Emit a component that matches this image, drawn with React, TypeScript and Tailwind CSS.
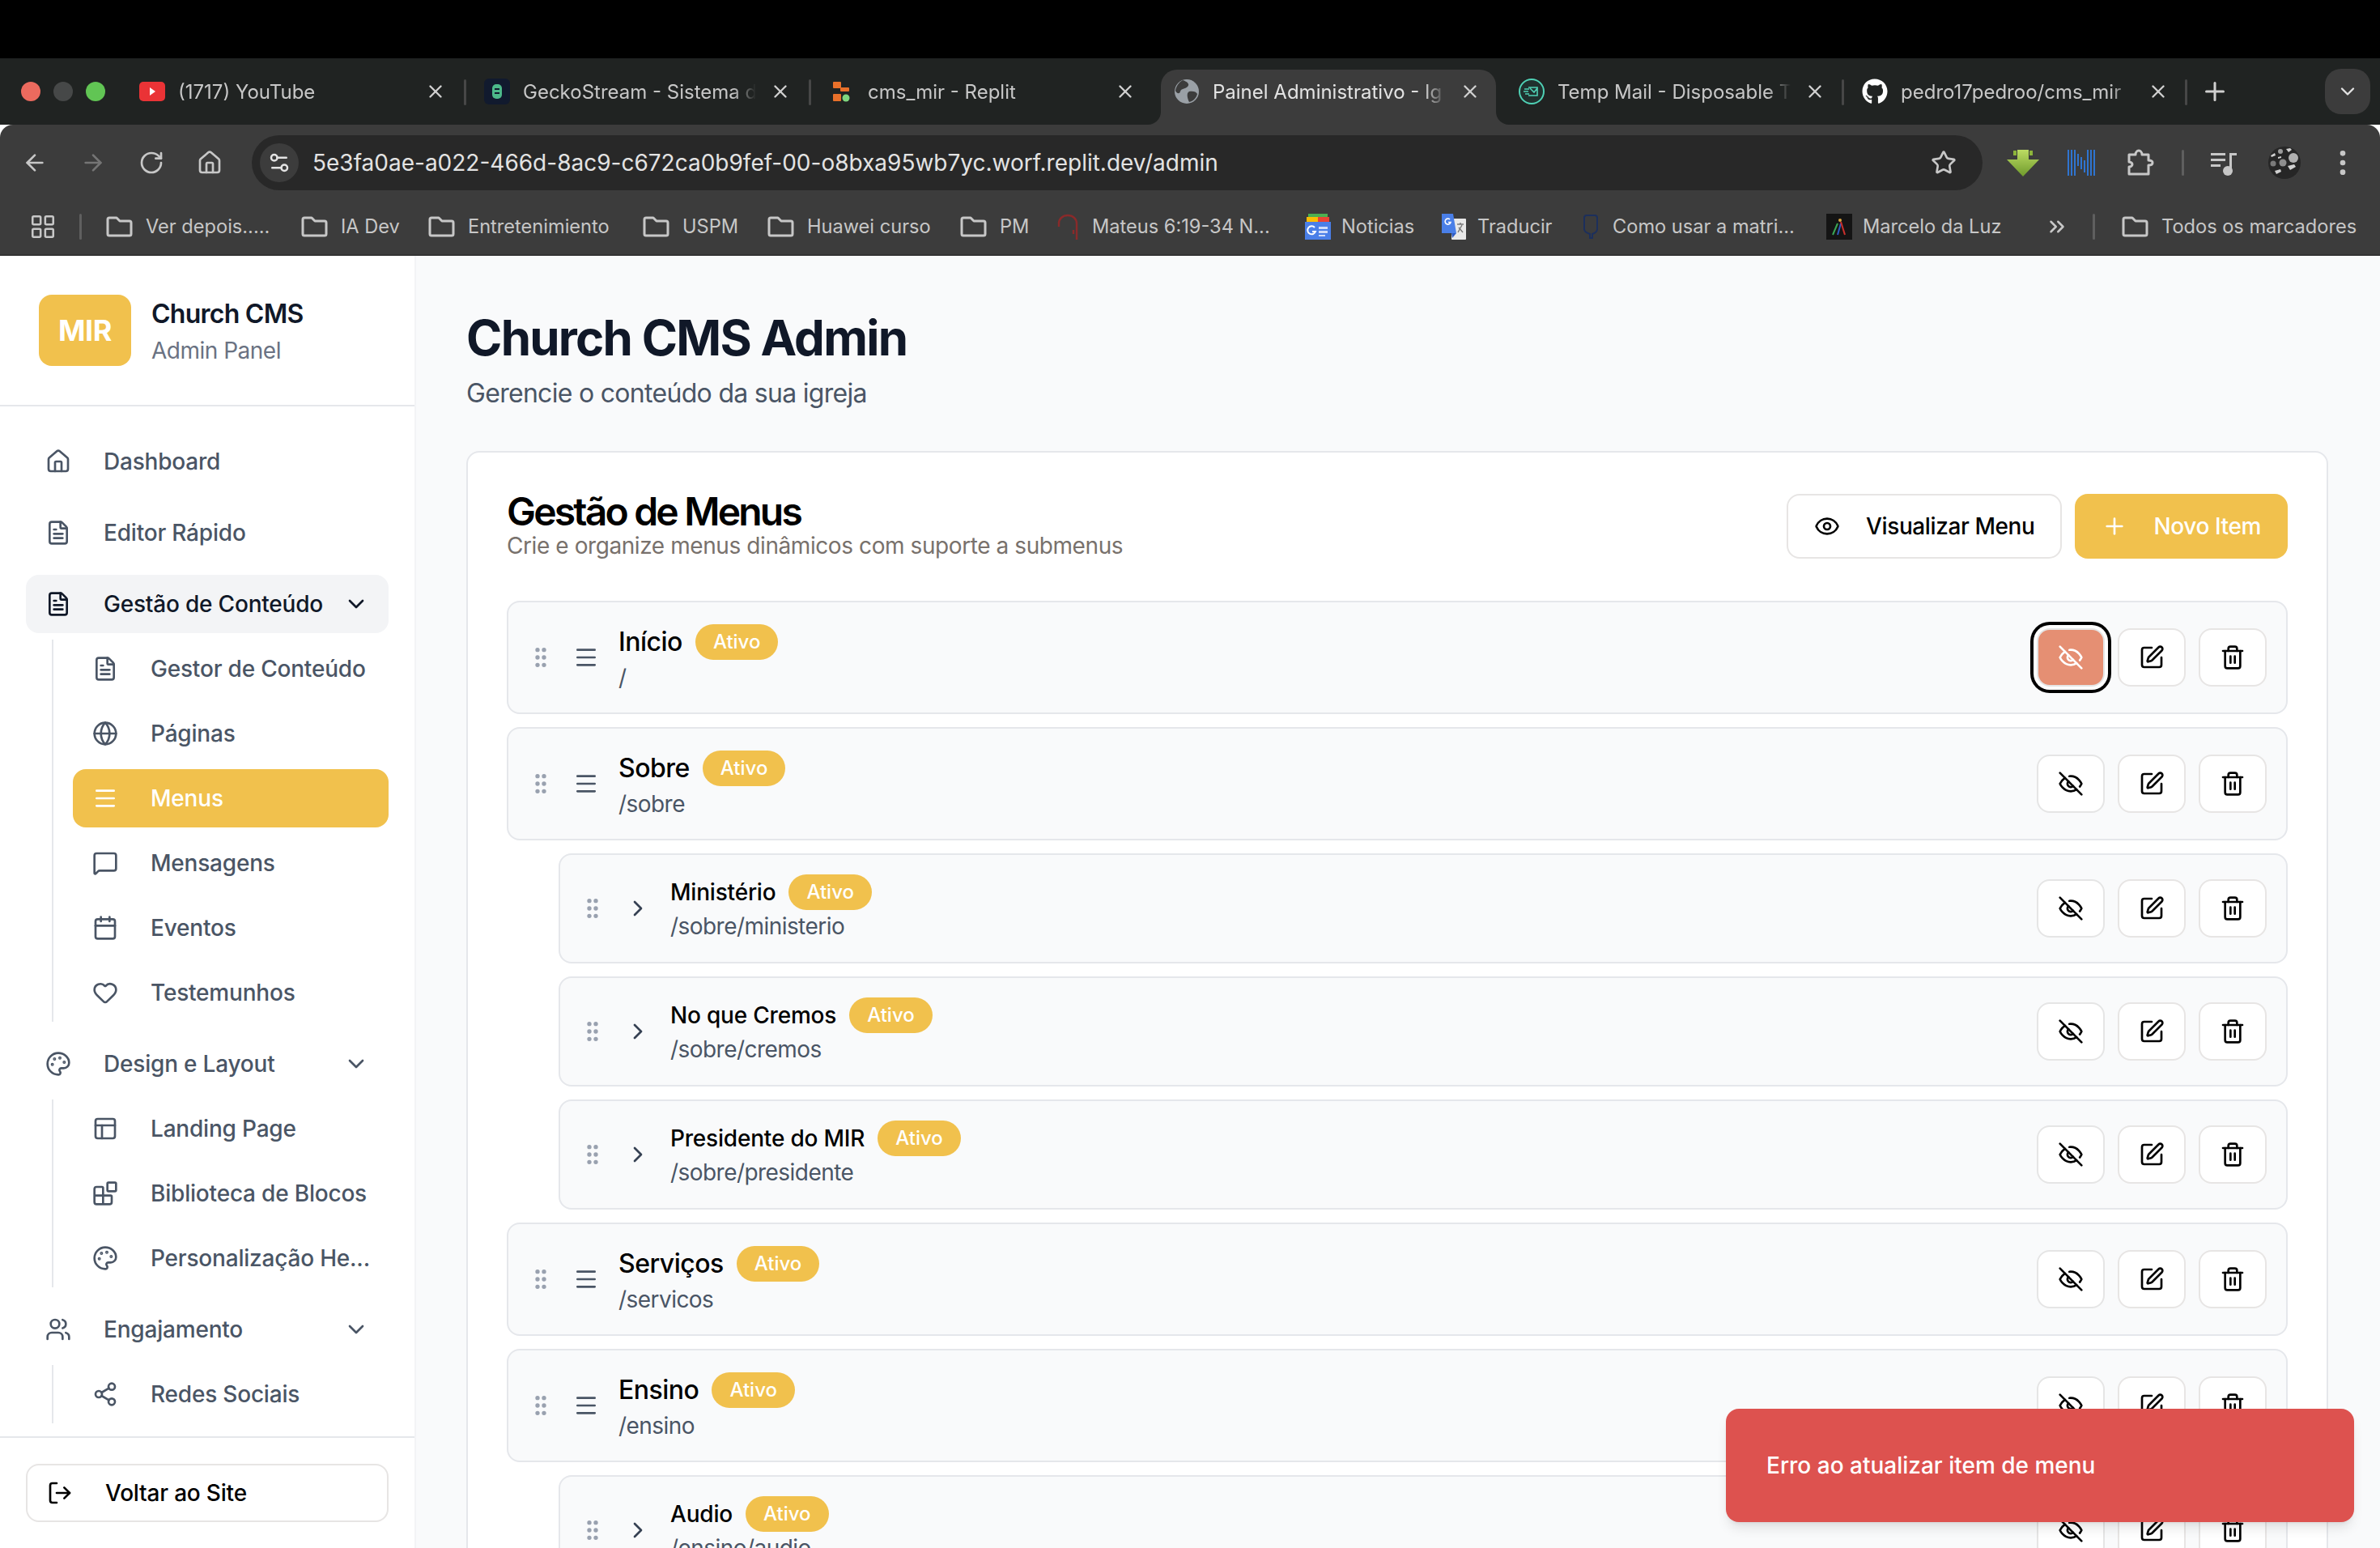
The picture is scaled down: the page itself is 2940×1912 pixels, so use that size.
import React from 'react';
import {
  ArrowLeft, ArrowRight, Blocks, Calendar, ChevronDown, ChevronRight, ChevronsRight, EllipsisVertical,
  Eye, FileText, Globe, GripVertical, Heart, House, LayoutGrid, LogOut, Menu,
  MessageSquare, Palette, PanelsTopLeft, Plus, RotateCw, Settings2, Share2, SquarePen, Star,
  Trash2, Users, X,
} from 'lucide-react';
import { FaGithub } from 'react-icons/fa';

const YoutubeIcon = () => (
  <svg width="32" height="24" viewBox="0 0 32 24">
    <rect width="32" height="24" rx="5" fill="#ea3336" />
    <path d="M13 7l7 5-7 5z" fill="#fff" />
  </svg>
);

const GeckoIcon = () => (
  <svg width="32" height="32" viewBox="0 0 32 32">
    <rect width="32" height="32" rx="6" fill="#111a2e" />
    <rect x="10" y="7" width="12" height="18" rx="5" fill="#4cb98a" />
    <path d="M13 13h6M13 18h6" stroke="#111a2e" strokeWidth="2" />
  </svg>
);

const ReplitIcon = () => (
  <svg width="32" height="32" viewBox="0 0 32 32">
    <rect x="5" y="4" width="10" height="8" rx="1" fill="#e8702a" />
    <rect x="14" y="11" width="11" height="5" rx="1" fill="#e8702a" />
    <rect x="5" y="19" width="10" height="9" rx="1" fill="#e8702a" />
    <circle cx="21" cy="24" r="4.5" fill="#7fd67f" />
  </svg>
);

const EarthIcon = () => (
  <svg width="30" height="30" viewBox="0 0 30 30">
    <circle cx="15" cy="15" r="15" fill="#9aa0a6" />
    <path d="M10 1c6 2 9 5 6 8s-8 2-9 6-5 2-6-1C2 8 6 3 10 1zM18 15c4-1 9 0 10 3-1 5-5 9-10 10-2-4-4-11 0-13z" fill="#3c3c3c" />
  </svg>
);

const TempMailIcon = () => (
  <svg width="32" height="32" viewBox="0 0 32 32" fill="none" stroke="#4fd1b5" strokeWidth="2">
    <circle cx="16" cy="16" r="15" fill="#20302e" />
    <path d="M12 11h11v10H12M7 13h6M6 16h6M8 19h5M14 12l5 5 4-5" strokeWidth="1.6" />
  </svg>
);

const SaveDownIcon = () => (
  <svg width="40" height="40" viewBox="0 0 40 40" className="shrink-0">
    <defs>
      <linearGradient id="saveGreen" x1="0" y1="0" x2="0" y2="1">
        <stop offset="0" stopColor="#bcdc63" />
        <stop offset="1" stopColor="#6f9a2c" />
      </linearGradient>
    </defs>
    <path d="M8 5h4v6H8zM28 5h4v6h-4z" fill="#8cb43a" />
    <path d="M13 4h14v12h13L20 37 0 16h13z" fill="url(#saveGreen)" />
  </svg>
);

const NBarsIcon = () => (
  <svg width="40" height="40" viewBox="0 0 40 40" className="shrink-0" fill="#2f74d0">
    <rect x="3" y="4" width="2" height="32" />
    <rect x="7" y="4" width="2" height="32" />
    <rect x="11" y="4" width="2" height="32" />
    <rect x="15" y="9" width="2" height="15" />
    <rect x="19" y="13" width="2" height="15" />
    <rect x="23" y="17" width="2" height="15" />
    <rect x="27" y="4" width="2" height="32" />
    <rect x="31" y="4" width="2" height="32" />
    <rect x="35" y="4" width="2" height="32" />
  </svg>
);

const ExtensionIcon = () => (
  <svg width="40" height="40" viewBox="0 0 40 40" fill="none" stroke="#c7c7c7" strokeWidth="3" strokeLinejoin="round" className="shrink-0">
    <path d="M7 10h8c0-3 2-5 4-5s4 2 4 5h8v7c3 0 5 1 5 3s-2 3-5 3v11H7v-9c3 0 4-2 4-3s-1-3-4-3z" />
  </svg>
);

const MediaIcon = () => (
  <svg width="40" height="40" viewBox="0 0 40 40" className="shrink-0" fill="#c7c7c7">
    <path d="M1 8h18v3H1zM1 15h18v3H1zM1 22h12v3H1z" />
    <path d="M24 8h9v3h-6v20h-3z" />
    <circle cx="22" cy="30" r="6" />
  </svg>
);

const AvatarIcon = () => (
  <svg width="40" height="40" viewBox="0 0 40 40" className="shrink-0">
    <circle cx="20" cy="20" r="20" fill="#262626" />
    <circle cx="31" cy="14" r="6" fill="#b0b0b0" />
    <circle cx="18" cy="20" r="4.5" fill="#8e8e8e" />
    <circle cx="6" cy="21" r="3.5" fill="#7a7a7a" />
    <circle cx="15" cy="6" r="3" fill="#9c9c9c" />
    <path d="M22 3l5-1 2 2-4 3zM3 11l5-3 1 3-5 2zM8 30l7-2 1 3-6 3zM24 24l8-2 2 3-7 4zM12 13l4-1v2l-4 1z" fill="#d0d0d0" />
  </svg>
);

const FolderIcon = () => (
  <svg width="33" height="28" viewBox="0 0 33 28" fill="none" stroke="currentColor" strokeWidth="3" strokeLinejoin="round" className="mr-4 shrink-0">
    <path d="M2 5a2 2 0 0 1 2-2h9l4 4h12a2 2 0 0 1 2 2v14a2 2 0 0 1-2 2H4a2 2 0 0 1-2-2z" />
  </svg>
);

const ArcIcon = () => (
  <svg width="26" height="32" viewBox="0 0 26 32" fill="none" stroke="#8a2a2a" strokeWidth="2.4" className="mr-[17px] shrink-0">
    <path d="M2 16V12C2 6 7 2 13 2s11 4 11 10v20" />
    <path d="M20 20v5" />
  </svg>
);

const NewsIcon = () => (
  <svg width="32" height="32" viewBox="0 0 32 32" className="mr-[13px] shrink-0">
    <rect x="4" y="0" width="24" height="8" fill="#4caf50" />
    <rect x="2" y="4" width="16" height="8" fill="#fbbc04" />
    <rect x="16" y="4" width="14" height="8" fill="#ea4335" />
    <rect x="0" y="10" width="32" height="22" fill="#4a7fe8" />
    <path d="M17 16h11v3H17zM17 21h11v3H17zM17 26h8v2h-8z" fill="#cfdcf9" />
    <path d="M12 17a5 5 0 1 0 1 5h-4" stroke="#fff" strokeWidth="2" fill="none" />
  </svg>
);

const TranslateIcon = () => (
  <svg width="30" height="32" viewBox="0 0 30 32" className="mr-[14px] shrink-0">
    <rect x="12" y="6" width="18" height="26" rx="1" fill="#e8e8e8" />
    <path d="M0 0h14l4 24H0z" fill="#4a7fe8" />
    <path d="M12 24l6 0-5 6z" fill="#2f5cc4" />
    <path d="M10 7a3.5 3.5 0 1 0 1 3.5H8" stroke="#fff" strokeWidth="1.6" fill="none" />
    <path d="M19 13h8M23 11v2M20 23l5-9M21 17l5 6" stroke="#777" strokeWidth="1.4" fill="none" />
  </svg>
);

const PillIcon = () => (
  <svg width="20" height="32" viewBox="0 0 20 32" fill="none" stroke="#1c2f5c" strokeWidth="2" className="mr-[17px] shrink-0">
    <path d="M5 2h10c2 0 3 1 3 3v14c0 3-3 5-6 6v5H9v-5c-3-1-7-3-7-6V5c0-2 1-3 3-3z" />
  </svg>
);

const MarceloIcon = () => (
  <svg width="32" height="32" viewBox="0 0 32 32" className="mr-[13px] shrink-0">
    <rect width="32" height="32" fill="#141414" />
    <path d="M8 26l6-14" stroke="#3aa655" strokeWidth="2" />
    <path d="M14 26l4-14" stroke="#2f5cc4" strokeWidth="2" />
    <path d="M18 10l5 16" stroke="#c9302c" strokeWidth="2" />
    <circle cx="17" cy="8" r="2" fill="#d9a441" />
  </svg>
);

// the older lucide eye-off, the current package draws it differently
const EyeOffOld = () => (
  <svg width="32" height="32" viewBox="0 0 24 24" fill="none" stroke="currentColor" strokeWidth="2" strokeLinecap="round" strokeLinejoin="round">
    <path d="M9.88 9.88a3 3 0 1 0 4.24 4.24" />
    <path d="M10.73 5.08A10.43 10.43 0 0 1 12 5c7 0 10 7 10 7a13.16 13.16 0 0 1-1.67 2.68" />
    <path d="M6.61 6.61A13.526 13.526 0 0 0 2 12s3 7 10 7a9.74 9.74 0 0 0 5.39-1.61" />
    <line x1="2" x2="22" y1="2" y2="22" />
  </svg>
);

const tabs = [
  { title: '(1717) YouTube', icon: <YoutubeIcon />, width: 'w-[426px]', sep: true },
  { title: 'GeckoStream - Sistema d', icon: <GeckoIcon />, width: 'w-[426px]', sep: true },
  { title: 'cms_mir - Replit', icon: <ReplitIcon />, width: 'w-[426px]', sep: false },
  { title: 'Painel Administrativo - Ig', icon: <EarthIcon />, width: 'w-[426px]', active: true, sep: false },
  { title: 'Temp Mail - Disposable T', icon: <TempMailIcon />, width: 'w-[424px]', sep: true },
  { title: 'pedro17pedroo/cms_mir', icon: <FaGithub size={32} color="#fff" />, width: 'w-[424px]', sep: true },
];

function BrowserTab({ title, icon, width, active, sep }: { title: string; icon: React.ReactNode; width: string; active?: boolean; sep?: boolean }) {
  return (
    <div className={`${width} relative h-[68px] shrink-0`}>
      {active && (
        <div className="absolute inset-y-0 left-[6px] right-[6px] rounded-t-[20px] bg-[#3c3c3c]">
          <div className="absolute -left-4 bottom-0 h-4 w-4 bg-[#3c3c3c]">
            <div className="h-full w-full rounded-br-2xl bg-[#202322]" />
          </div>
          <div className="absolute -right-4 bottom-0 h-4 w-4 bg-[#3c3c3c]">
            <div className="h-full w-full rounded-bl-2xl bg-[#202322]" />
          </div>
        </div>
      )}
      <div className="relative flex h-[54px] items-center pl-[22px]">
        <div className="flex w-[32px] shrink-0 items-center justify-center">{icon}</div>
        <span className={`ml-4 mt-[2px] w-[288px] whitespace-nowrap text-[24px] ${active ? 'text-[#e3e3e3]' : 'text-[#c7c7c7]'} [mask-image:linear-gradient(to_right,black_90%,transparent)]`}>
          {title}
        </span>
        <X size={26} strokeWidth={2.2} className="absolute left-[375px] text-[#d0d0d0]" />
      </div>
      {sep && <div className="absolute right-0 top-[12px] h-[32px] w-[3px] rounded bg-[#474747]" />}
    </div>
  );
}

const bookmarks = [
  { label: 'Ver depois.....', icon: <FolderIcon />, width: 'w-[241px]' },
  { label: 'IA Dev', icon: <FolderIcon />, width: 'w-[157px]' },
  { label: 'Entretenimiento', icon: <FolderIcon />, width: 'w-[265px]' },
  { label: 'USPM', icon: <FolderIcon />, width: 'w-[154px]' },
  { label: 'Huawei curso', icon: <FolderIcon />, width: 'w-[238px]' },
  { label: 'PM', icon: <FolderIcon />, width: 'w-[120px]' },
  { label: 'Mateus 6:19-34 N...', icon: <ArcIcon />, width: 'w-[306px]' },
  { label: 'Noticias', icon: <NewsIcon />, width: 'w-[169px]' },
  { label: 'Traducir', icon: <TranslateIcon />, width: 'w-[174px]' },
  { label: 'Como usar a matri...', icon: <PillIcon />, width: 'w-[301px]' },
  { label: 'Marcelo da Luz', icon: <MarceloIcon />, width: 'w-[270px]' },
];

function BrowserChrome() {
  return (
    <div className="shrink-0 font-['Inter',sans-serif]">
      <div className="h-[72px] bg-black" />
      <div className="flex h-[82px] bg-[#202322] pl-[26px] pt-[14px]">
        <div className="flex h-[54px] items-center gap-4">
          <div className="h-6 w-6 rounded-full bg-[#ec6a5e]" />
          <div className="h-6 w-6 rounded-full bg-[#464848]" />
          <div className="h-6 w-6 rounded-full bg-[#61c554]" />
        </div>
        <div className="ml-[20px] flex">
          {tabs.map((t) => (
            <BrowserTab key={t.title} {...t} />
          ))}
        </div>
        <div className="flex h-[54px] items-center">
          <Plus size={36} strokeWidth={2} className="ml-4 text-[#d0d0d0]" />
          <div className="ml-[118px] flex h-[56px] w-[56px] items-center justify-center rounded-[20px] bg-[#3c3c3c]">
            <ChevronDown size={28} className="text-[#e3e3e3]" />
          </div>
        </div>
      </div>
      <div className="rounded-t-[16px] border-b-2 border-[#333333] bg-[#3c3c3c]">
        <div className="flex h-[92px] items-center pl-[27px] pt-[1px]">
          <div className="flex items-center gap-10">
            <ArrowLeft size={32} className="text-[#c7c7c7]" />
            <ArrowRight size={32} className="text-[#757575]" />
            <RotateCw size={32} className="text-[#c7c7c7]" />
            <House size={32} className="text-[#c7c7c7]" />
          </div>
          <div className="ml-9 flex h-[68px] w-[2138px] items-center rounded-full bg-[#282828] pr-[32px]">
            <div className="ml-[10px] flex h-12 w-12 items-center justify-center rounded-full bg-[#3c3c3c]">
              <Settings2 size={30} className="text-[#e3e3e3]" />
            </div>
            <span className="ml-[17px] flex-1 text-[28px] text-[#e3e3e3]">5e3fa0ae-a022-466d-8ac9-c672ca0b9fef-00-o8bxa95wb7yc.worf.replit.dev/admin</span>
            <Star size={32} className="text-[#c7c7c7]" />
          </div>
          <div className="ml-[30px] flex items-center gap-8">
            <SaveDownIcon />
            <NBarsIcon />
            <ExtensionIcon />
            <div className="h-[32px] w-[3px] rounded bg-[#5f5f5f]" />
            <MediaIcon />
            <AvatarIcon />
            <EllipsisVertical size={40} className="text-[#c7c7c7]" />
          </div>
        </div>
        <div className="flex h-[68px] items-center pl-[36px] text-[23.6px] text-[#c7c7c7]">
          <LayoutGrid size={34} strokeWidth={1.8} className="shrink-0" />
          <div className="ml-[28px] mr-[30px] h-[32px] w-[3px] rounded bg-[#5f5f5f]" />
          {bookmarks.map((b) => (
            <div key={b.label} className={`${b.width} flex shrink-0 items-center whitespace-nowrap`}>
              {b.icon}
              <span>{b.label}</span>
            </div>
          ))}
          <ChevronsRight size={30} className="shrink-0" />
          <div className="ml-[29px] mr-[33px] h-[32px] w-[3px] rounded bg-[#5f5f5f]" />
          <FolderIcon />
          <span className="whitespace-nowrap">Todos os marcadores</span>
        </div>
      </div>
    </div>
  );
}

function NavItem({ icon: Icon, label, open, active, ink }: { icon: React.ElementType; label: string; open?: boolean; active?: boolean; ink?: boolean }) {
  return (
    <div className={`flex h-[72px] items-center rounded-2xl px-6 text-[28px] font-medium tracking-[-0.2px] ${active ? 'bg-[#f1c14d] text-white' : ink ? 'bg-gray-100 text-gray-900' : 'text-gray-600'}`}>
      <Icon size={32} className="shrink-0" />
      <span className="ml-10 flex-1 whitespace-nowrap">{label}</span>
      {open && <ChevronDown size={32} className="shrink-0" />}
    </div>
  );
}

function SubList({ children }: { children: React.ReactNode }) {
  return <div className="ml-8 mt-2 flex flex-col gap-2 border-l-2 border-gray-200 pl-6">{children}</div>;
}

function Sidebar() {
  return (
    <aside className="flex w-[514px] shrink-0 flex-col border-r-2 border-gray-100 bg-white">
      <div className="flex h-[186px] shrink-0 items-center gap-[25px] border-b-2 border-gray-200 px-12">
        <div className="flex h-[88px] w-[114px] items-center justify-center rounded-2xl bg-[#f1c14d] text-[36px] font-bold tracking-[-0.4px] text-white">MIR</div>
        <div className="pt-[3px]">
          <div className="text-[32px] font-semibold leading-[44px] tracking-[-0.75px] text-gray-900">Church CMS</div>
          <div className="mt-[3px] text-[28px] leading-[40px] tracking-[-0.5px] text-gray-500">Admin Panel</div>
        </div>
      </div>
      <nav className="flex flex-1 flex-col gap-4 overflow-hidden px-8 pt-8">
        <NavItem icon={House} label="Dashboard" />
        <NavItem icon={FileText} label="Editor Rápido" />
        <div>
          <NavItem icon={FileText} label="Gestão de Conteúdo" open ink />
          <SubList>
            <NavItem icon={FileText} label="Gestor de Conteúdo" />
            <NavItem icon={Globe} label="Páginas" />
            <NavItem icon={Menu} label="Menus" active />
            <NavItem icon={MessageSquare} label="Mensagens" />
            <NavItem icon={Calendar} label="Eventos" />
            <NavItem icon={Heart} label="Testemunhos" />
          </SubList>
        </div>
        <div>
          <NavItem icon={Palette} label="Design e Layout" open />
          <SubList>
            <NavItem icon={PanelsTopLeft} label="Landing Page" />
            <NavItem icon={Blocks} label="Biblioteca de Blocos" />
            <NavItem icon={Palette} label="Personalização He..." />
          </SubList>
        </div>
        <div>
          <NavItem icon={Users} label="Engajamento" open />
          <SubList>
            <NavItem icon={Share2} label="Redes Sociais" />
          </SubList>
        </div>
      </nav>
      <div className="shrink-0 border-t-2 border-gray-200 bg-white p-8">
        <div className="flex h-[72px] items-center rounded-2xl border-2 border-[#e7e5e4] px-6 text-[28px] font-medium tracking-[-0.2px] text-black">
          <LogOut size={32} className="shrink-0" />
          <span className="ml-10">Voltar ao Site</span>
        </div>
      </div>
    </aside>
  );
}

function RowButtons({ focused }: { focused?: boolean }) {
  return (
    <div className="flex shrink-0 items-center gap-4">
      <button className={`flex h-[72px] w-[84px] items-center justify-center rounded-2xl border-2 border-[#e5e5e5] ${focused ? 'bg-[#e58f73] text-white ring-4 ring-black ring-offset-4 ring-offset-white' : 'bg-white text-black'}`}>
        <EyeOffOld />
      </button>
      <button className="flex h-[72px] w-[84px] items-center justify-center rounded-2xl border-2 border-[#e7e5e4] bg-white text-black">
        <SquarePen size={32} />
      </button>
      <button className="flex h-[72px] w-[84px] items-center justify-center rounded-2xl border-2 border-[#e7e5e4] bg-white text-black">
        <Trash2 size={32} />
      </button>
    </div>
  );
}

function Badge() {
  return <span className="flex h-[44px] items-center rounded-full bg-[#f1c14d] px-[22px] text-[24px] font-medium tracking-normal text-white">Ativo</span>;
}

function MenuRow({ name, path, child, focused }: { name: string; path: string; child?: boolean; focused?: boolean }) {
  return (
    <div className={`flex shrink-0 items-center justify-between rounded-2xl border-2 border-[#e5e7eb] bg-[#f9fafb] p-6 ${child ? 'ml-16' : ''}`}>
      <div className="flex items-center gap-6">
        <GripVertical size={32} className="text-gray-400" />
        {child ? <ChevronRight size={32} className="text-gray-700" /> : <Menu size={32} className="text-gray-600" />}
        <div>
          <div className={`flex items-center gap-4 font-medium text-black ${child ? 'h-[44px] text-[28px] tracking-[-0.2px]' : 'h-[50px] text-[32px] tracking-[-0.5px]'}`}>
            <span>{name}</span>
            <Badge />
          </div>
          <div className={`text-[28px] tracking-[-0.55px] text-gray-600 ${child ? 'leading-[40px]' : 'leading-[38px]'}`}>{path}</div>
        </div>
      </div>
      <RowButtons focused={focused} />
    </div>
  );
}

export default function App() {
  return (
    <div className="flex h-[1912px] w-[2940px] flex-col overflow-hidden bg-white font-['Inter',sans-serif]">
      <BrowserChrome />
      <div className="flex min-h-0 flex-1">
        <Sidebar />
        <main className="min-w-0 flex-1 overflow-hidden bg-[#f9fafb] pl-[62px] pr-16 pt-16">
          <h1 className="text-[60px] font-bold leading-[74px] tracking-[-1.75px] text-gray-900">Church CMS Admin</h1>
          <p className="mb-[47px] mt-2 text-[32px] leading-[48px] tracking-[-0.7px] text-gray-600">Gerencie o conteúdo da sua igreja</p>
          <section className="rounded-2xl border-2 border-[#e5e7eb] bg-white p-12">
            <div className="mb-[49px] flex items-start justify-between">
              <div className="h-[86px]">
                <h2 className="text-[48px] font-semibold leading-[49px] tracking-[-2.8px] text-black">Gestão de Menus</h2>
                <p className="text-[28px] leading-[36px] tracking-[-0.42px] text-[#78716c]">Crie e organize menus dinâmicos com suporte a submenus</p>
              </div>
              <div className="mt-[3px] flex gap-4 text-[28px] font-medium tracking-[-0.4px]">
                <button className="flex h-[80px] items-center gap-8 rounded-2xl border-2 border-[#e7e5e4] bg-white px-8 text-black">
                  <Eye size={32} />
                  Visualizar Menu
                </button>
                <button className="flex h-[80px] items-center gap-8 rounded-2xl bg-[#f1c14d] px-[33px] text-white">
                  <Plus size={32} />
                  Novo Item
                </button>
              </div>
            </div>
            <div className="flex flex-col gap-4">
              <MenuRow name="Início" path="/" focused />
              <MenuRow name="Sobre" path="/sobre" />
              <MenuRow name="Ministério" path="/sobre/ministerio" child />
              <MenuRow name="No que Cremos" path="/sobre/cremos" child />
              <MenuRow name="Presidente do MIR" path="/sobre/presidente" child />
              <MenuRow name="Serviços" path="/servicos" />
              <MenuRow name="Ensino" path="/ensino" />
              <MenuRow name="Audio" path="/ensino/audio" child />
            </div>
          </section>
        </main>
      </div>
      <div className="absolute left-[2132px] top-[1740px] flex h-[140px] w-[776px] items-center rounded-2xl bg-[#dd524f] px-[50px] text-[28px] font-medium text-white shadow-lg">
        Erro ao atualizar item de menu
      </div>
    </div>
  );
}
